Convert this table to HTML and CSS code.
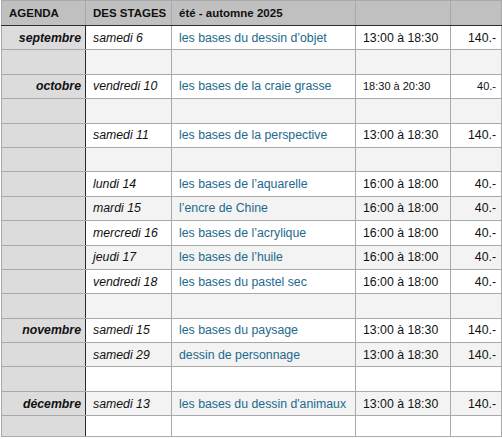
FILE: index.html
```html
<!DOCTYPE html>
<html lang="fr">
<head>
<meta charset="utf-8">
<title>Agenda des stages</title>
<link rel="stylesheet" href="styles.css">
</head>
<body>
<div class="wrap">
<table class="agenda">
  <colgroup>
    <col class="c1"><col class="c2"><col class="c3"><col class="c4"><col class="c5">
  </colgroup>
  <thead>
    <tr>
      <th class="m">AGENDA</th>
      <th>DES STAGES</th>
      <th class="season">été - automne 2025</th>
      <th></th>
      <th></th>
    </tr>
  </thead>
  <tbody>
    <tr><td class="m">septembre</td><td class="d">samedi 6</td><td class="t">les bases du dessin d’objet</td><td class="h">13:00 à 18:30</td><td class="p">140.-</td></tr>
    <tr><td class="m"></td><td></td><td></td><td></td><td></td></tr>
    <tr><td class="m">octobre</td><td class="d">vendredi 10</td><td class="t">les bases de la craie grasse</td><td class="h small">18:30 à 20:30</td><td class="p small">40.-</td></tr>
    <tr><td class="m"></td><td></td><td></td><td></td><td></td></tr>
    <tr><td class="m"></td><td class="d">samedi 11</td><td class="t">les bases de la perspective</td><td class="h">13:00 à 18:30</td><td class="p">140.-</td></tr>
    <tr><td class="m"></td><td></td><td></td><td></td><td></td></tr>
    <tr><td class="m"></td><td class="d">lundi 14</td><td class="t">les bases de l’aquarelle</td><td class="h">16:00 à 18:00</td><td class="p">40.-</td></tr>
    <tr><td class="m"></td><td class="d">mardi 15</td><td class="t">l’encre de Chine</td><td class="h">16:00 à 18:00</td><td class="p">40.-</td></tr>
    <tr><td class="m"></td><td class="d">mercredi 16</td><td class="t">les bases de l’acrylique</td><td class="h">16:00 à 18:00</td><td class="p">40.-</td></tr>
    <tr><td class="m"></td><td class="d">jeudi 17</td><td class="t">les bases de l’huile</td><td class="h">16:00 à 18:00</td><td class="p">40.-</td></tr>
    <tr><td class="m"></td><td class="d">vendredi 18</td><td class="t">les bases du pastel sec</td><td class="h">16:00 à 18:00</td><td class="p">40.-</td></tr>
    <tr><td class="m"></td><td></td><td></td><td></td><td></td></tr>
    <tr><td class="m">novembre</td><td class="d">samedi 15</td><td class="t">les bases du paysage</td><td class="h">13:00 à 18:30</td><td class="p">140.-</td></tr>
    <tr><td class="m"></td><td class="d">samedi 29</td><td class="t">dessin de personnage</td><td class="h">13:00 à 18:30</td><td class="p">140.-</td></tr>
    <tr><td class="m"></td><td></td><td></td><td></td><td></td></tr>
    <tr><td class="m">décembre</td><td class="d">samedi 13</td><td class="t">les bases du dessin d'animaux</td><td class="h">13:00 à 18:30</td><td class="p">140.-</td></tr>
    <tr class="last"><td class="m"></td><td></td><td></td><td></td><td></td></tr>
  </tbody>
</table>
</div>
</body>
</html>
```

FILE: styles.css
```css
html, body {
  margin: 0;
  padding: 0;
  background: #ffffff;
}

.wrap {
  padding: 0 0 0 1px;
}

.agenda {
  border-collapse: collapse;
  table-layout: fixed;
  width: 500px;
  font-family: "Liberation Sans", Arial, Helvetica, sans-serif;
  font-size: 12.3px;
  color: #111111;
}

.c1 { width: 84px; }
.c2 { width: 86px; }
.c3 { width: 184px; }
.c4 { width: 95px; }
.c5 { width: 51px; }

.agenda th,
.agenda td {
  border: 1px solid #a9a9a9;
  padding: 0 5px 0 7px;
  white-space: nowrap;
  overflow: hidden;
  vertical-align: middle;
}

.agenda thead tr {
  height: 25px;
}

.agenda th {
  background: #c0c0c0;
  font-weight: bold;
  font-size: 11.5px;
  text-align: left;
  border-bottom: 1px solid #2e2e2e;
  color: #111111;
}

.agenda tbody tr {
  height: 24.4px;
}

.agenda tbody tr.last {
  height: 21px;
}

.agenda tbody td {
  background: #ffffff;
}

.agenda tbody tr:nth-child(even) td {
  background: #f3f3f3;
}

.agenda tbody tr td.m {
  background: #dcdcdc;
  font-weight: bold;
  font-style: italic;
  text-align: right;
  padding: 0 4px 0 4px;
  border-right: 1px solid #2a2a2a;
}

.agenda .d {
  font-style: italic;
}

.agenda .t {
  color: #1d6a8d;
}

.agenda .p {
  text-align: right;
}

.agenda .small {
  font-size: 11px;
}
```
